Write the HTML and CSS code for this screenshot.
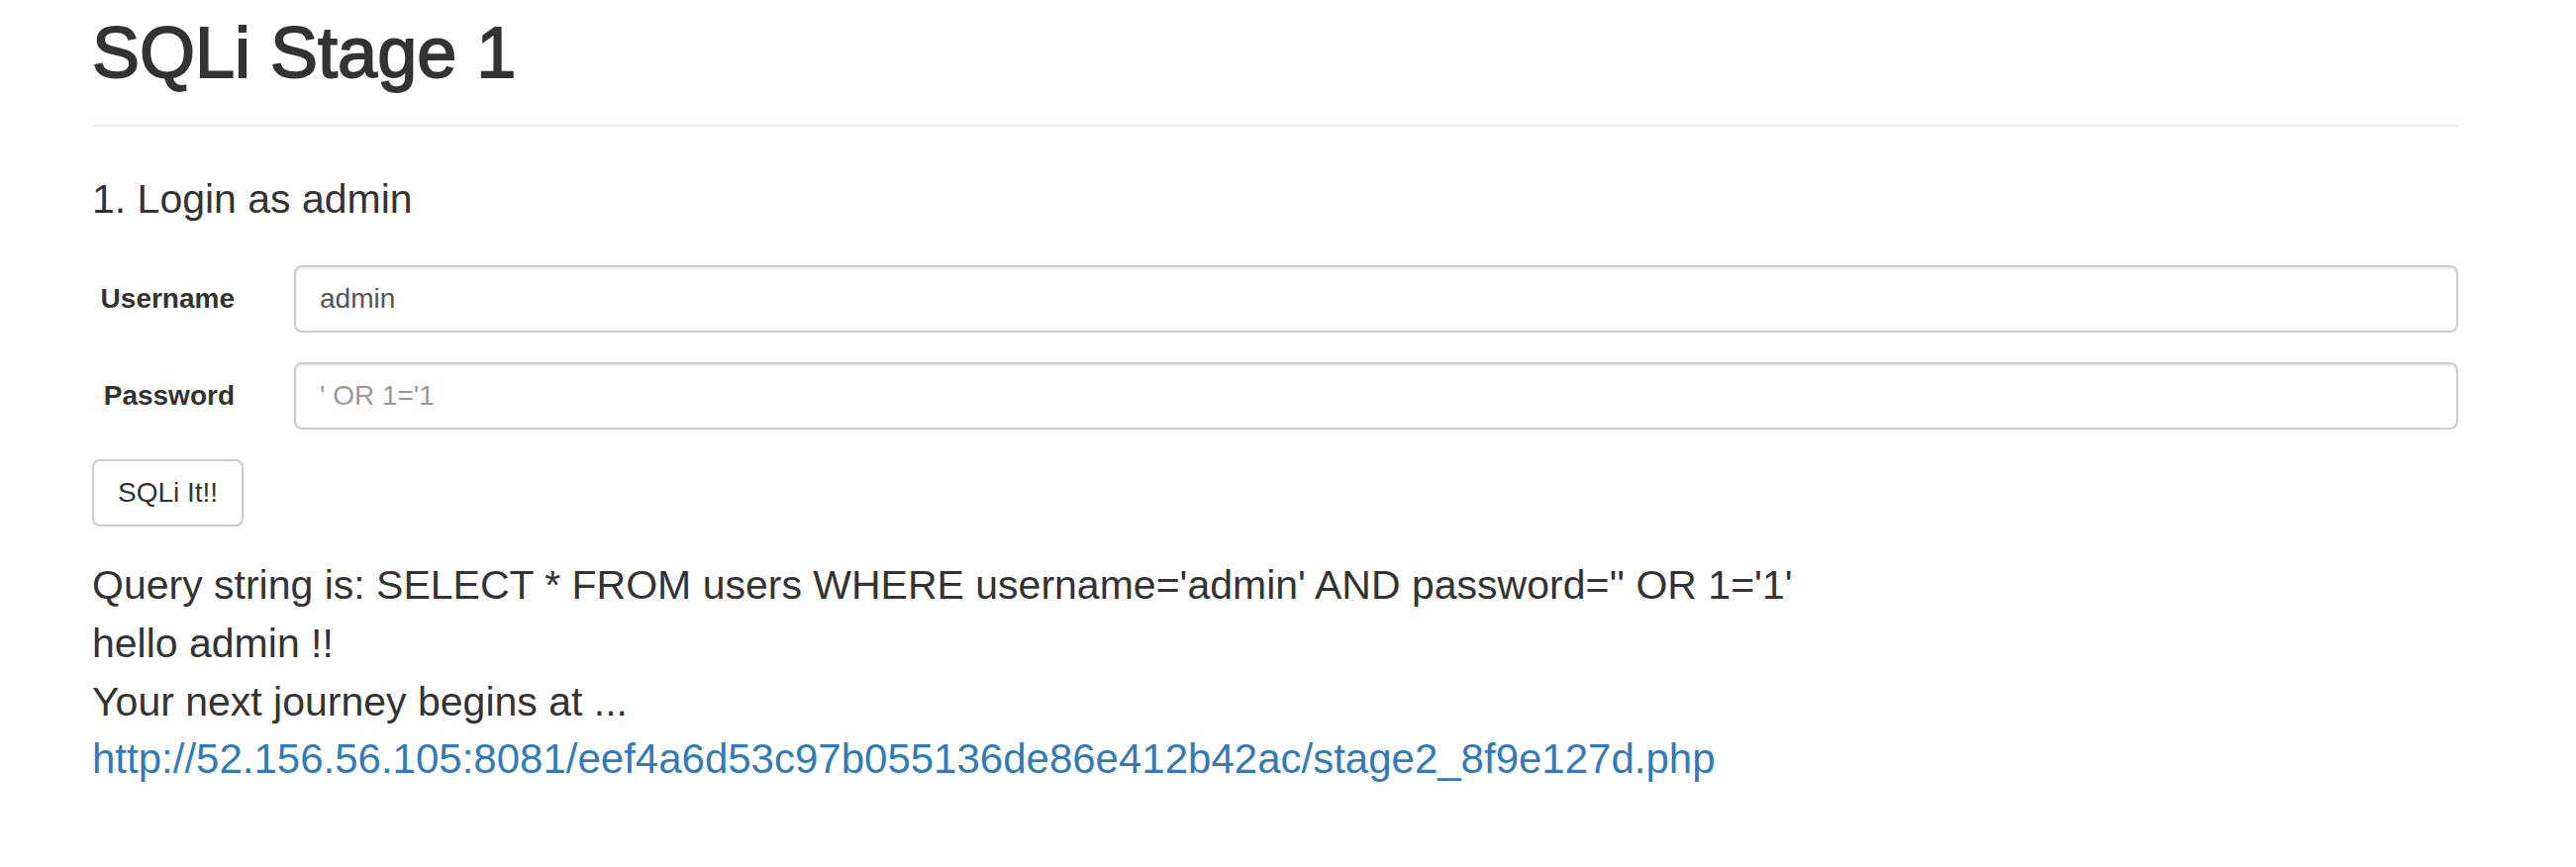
FILE: index.html
```html
<!DOCTYPE html>
<html lang="en">
<head>
<meta charset="utf-8">
<title>SQLi Stage 1</title>
<link rel="stylesheet" href="styles.css">
</head>
<body>
<div class="container">
  <div class="page-header">
    <h1>SQLi Stage 1</h1>
  </div>
  <h4 class="step">1. Login as admin</h4>
  <form class="login-form">
    <div class="form-row">
      <label class="form-label" for="username">Username</label>
      <input class="form-input" id="username" type="text" value="admin">
    </div>
    <div class="form-row">
      <label class="form-label" for="password">Password</label>
      <input class="form-input" id="password" type="text" placeholder="' OR 1='1">
    </div>
    <button class="btn" type="button">SQLi It!!</button>
  </form>
  <div class="result">
    <div>Query string is: SELECT * FROM users WHERE username='admin' AND password='' OR 1='1'</div>
    <div>hello admin !!</div>
    <div>Your next journey begins at ...</div>
    <div><a class="next-link" href="#">http://52.156.56.105:8081/eef4a6d53c97b055136de86e412b42ac/stage2_8f9e127d.php</a></div>
  </div>
</div>
</body>
</html>
```
FILE: styles.css
```css
html, body {
  margin: 0;
  padding: 0;
  background: #fff;
}
body {
  font-family: "Liberation Sans", Arial, sans-serif;
  color: #333;
}
.container {
  width: 2390px;
  padding-left: 93px;
}
.page-header {
  padding: 13px 0 33px;
  border-bottom: 2px solid #eee;
}
.page-header h1 {
  margin: 0;
  font-size: 72px;
  line-height: 80px;
  font-weight: 400;
  color: #333;
  -webkit-text-stroke: 1.8px #333;
}
.step {
  margin: 52px 0 0;
  font-size: 41px;
  line-height: 42px;
  font-weight: 400;
  color: #333;
}
.login-form {
  margin-top: 46px;
}
.form-row {
  display: flex;
  align-items: center;
  margin-bottom: 30px;
}
.form-label {
  flex: 0 0 144px;
  margin-right: 60px;
  text-align: right;
  font-size: 28px;
  font-weight: 700;
  color: #333;
}
.form-input {
  flex: 1;
  box-sizing: border-box;
  height: 68px;
  padding: 12px 24px;
  font-family: "Liberation Sans", Arial, sans-serif;
  font-size: 28px;
  color: #555;
  background: #fff;
  border: 2px solid #ccc;
  border-radius: 8px;
  box-shadow: inset 0 2px 2px rgba(0, 0, 0, 0.075);
  outline: none;
}
.form-input::placeholder {
  color: #999;
}
.btn {
  box-sizing: border-box;
  height: 68px;
  padding: 12px 24px;
  font-family: "Liberation Sans", Arial, sans-serif;
  font-size: 28px;
  color: #333;
  background: #fff;
  border: 2px solid #ccc;
  border-radius: 8px;
}
.result {
  margin-top: 30px;
  font-size: 41px;
  line-height: 58.8px;
  color: #333;
}
.next-link {
  font-size: 42px;
  color: #337ab7;
  text-decoration: none;
}
```
